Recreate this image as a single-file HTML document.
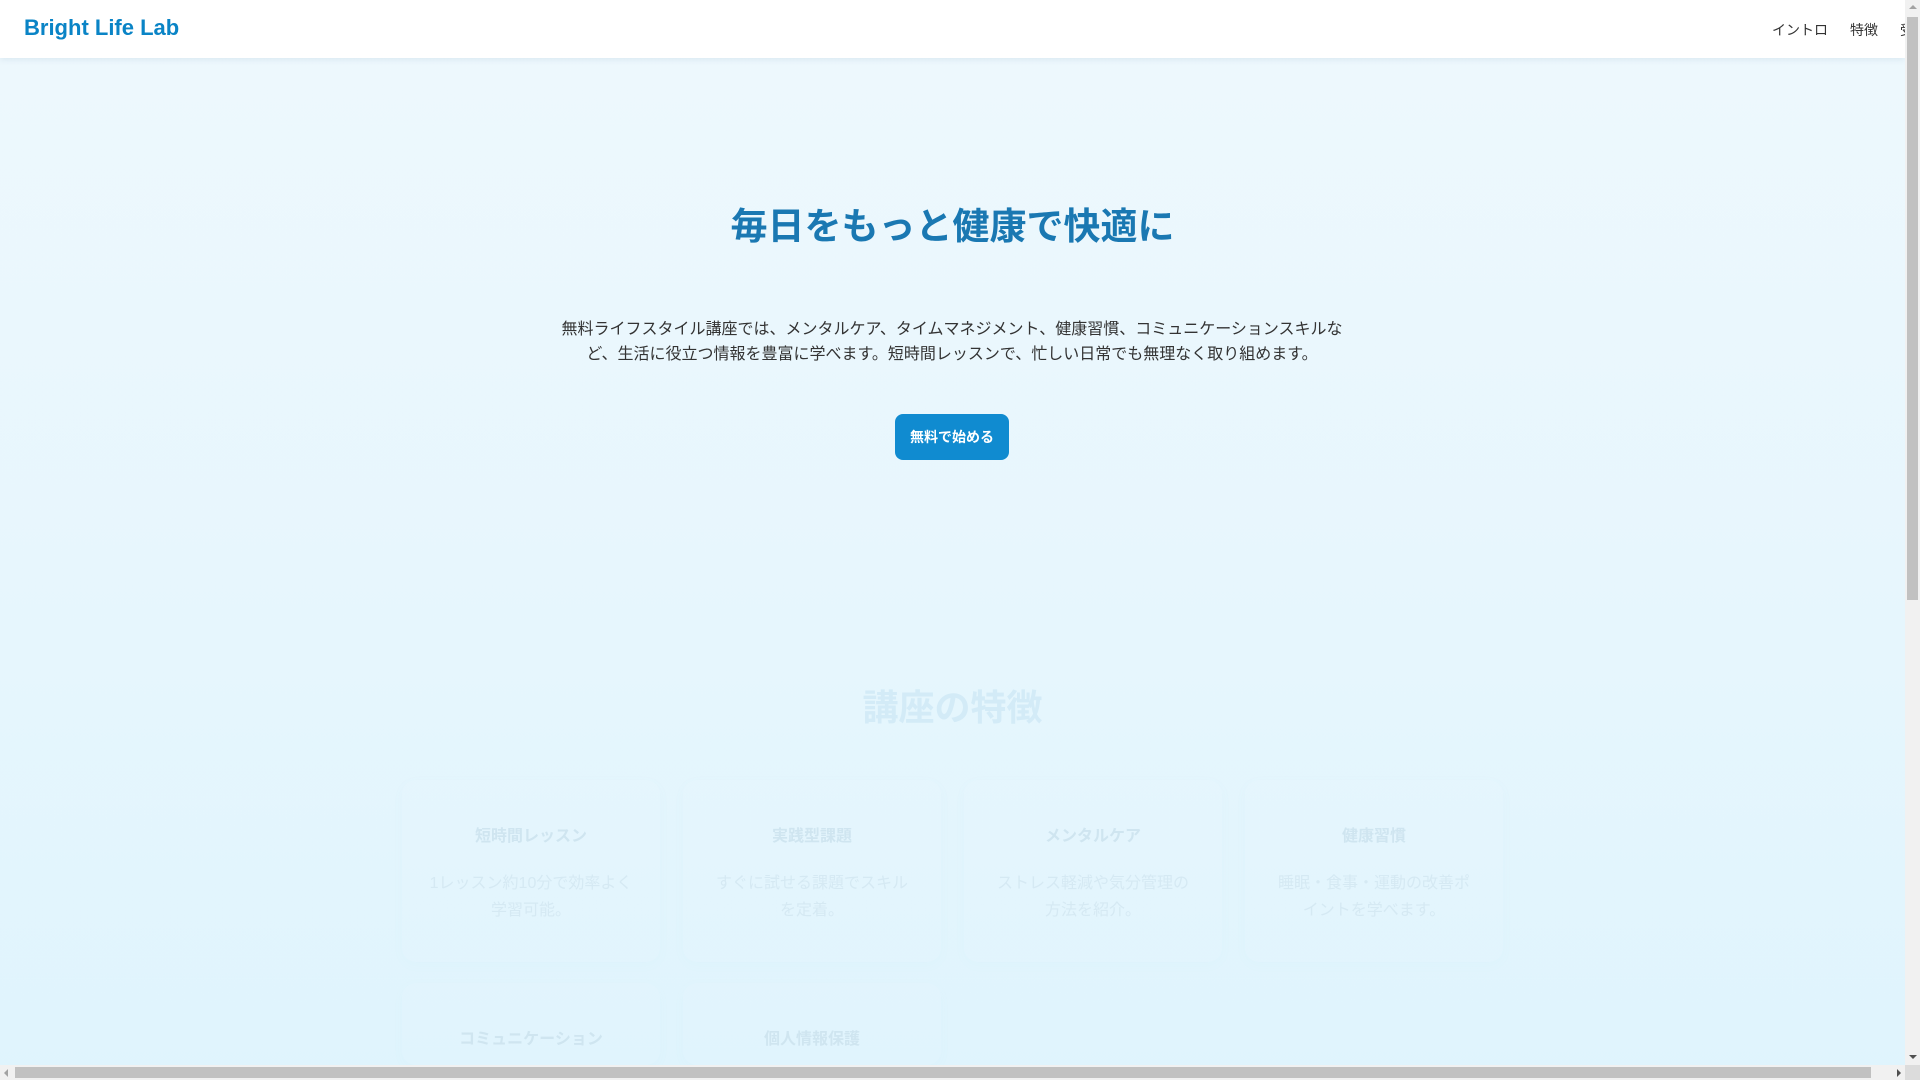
<!DOCTYPE html>
<html lang="ja"><head><meta charset="utf-8">
<style>
*{margin:0;padding:0;box-sizing:border-box}
html,body{width:1920px;height:1080px;overflow:hidden}
body{font-family:"Liberation Sans","Noto Sans CJK JP",sans-serif;background:linear-gradient(180deg,#eef8fd 0%,#e6f6fd 60%,#dff4fd 100%);position:relative}
header{position:absolute;left:0;top:0;width:1905px;height:58px;background:#fff;box-shadow:0 2px 6px rgba(0,60,110,.08);z-index:2}
.logo{position:absolute;left:24px;top:15px;font-size:22px;font-weight:bold;color:#0a84c6}
nav{position:absolute;left:1772px;top:20px;font-size:14px;color:#333;white-space:nowrap}
nav span{margin-right:22px}
h1{position:absolute;left:0;width:1905px;top:203px;text-align:center;font-size:37px;color:#1a78b2;font-weight:bold;line-height:48px}
p.lead{position:absolute;left:552px;width:800px;top:317px;text-align:center;font-size:16px;line-height:25px;color:#333}
.btn{position:absolute;left:895px;top:414px;width:114px;height:46px;background:#108bd0;border-radius:8px;color:#fff;font-size:14px;font-weight:bold;text-align:center;line-height:46px}
h2{position:absolute;left:0;width:1905px;top:684px;text-align:center;font-size:36px;color:#d3ebf7;line-height:48px}
.card{position:absolute;width:258px;height:182px;border-radius:14px;background:rgba(255,255,255,.06);box-shadow:0 3px 12px rgba(120,180,210,.03);text-align:center;overflow:hidden}
.card h3{margin-top:46px;font-size:16px;color:#cfe5f0;line-height:22px}
.card p{margin:22px 27px 0;font-size:16px;line-height:27px;color:#d5e9f3}
.vs{position:absolute;left:1905px;top:0;width:15px;height:1080px;background:#f1f1f1;z-index:5}
.vs .t{position:absolute;left:2px;top:17px;width:11px;height:583px;background:#c1c1c1}
.hs{position:absolute;left:0;top:1065px;width:1905px;height:15px;background:#f1f1f1;z-index:5}
.hs .t{position:absolute;left:15px;top:2px;width:1856px;height:11px;background:#c1c1c1}
.corner{position:absolute;left:1905px;top:1065px;width:15px;height:15px;background:#dcdcdc;z-index:6}
.ar{position:absolute;width:0;height:0;border:4px solid transparent}
</style></head><body>
<header><div class="logo">Bright Life Lab</div><nav><span>イントロ</span><span>特徴</span><span>受講</span></nav></header>
<h1>毎日をもっと健康で快適に</h1>
<p class="lead">無料ライフスタイル講座では、メンタルケア、タイムマネジメント、健康習慣、コミュニケーションスキルなど、生活に役立つ情報を豊富に学べます。短時間レッスンで、忙しい日常でも無理なく取り組めます。</p>
<div class="btn">無料で始める</div>
<h2>講座の特徴</h2>
<div class="card" style="left:402px;top:780px"><h3>短時間レッスン</h3><p>1レッスン約10分で効率よく学習可能。</p></div>
<div class="card" style="left:683px;top:780px"><h3>実践型課題</h3><p>すぐに試せる課題でスキルを定着。</p></div>
<div class="card" style="left:964px;top:780px"><h3>メンタルケア</h3><p>ストレス軽減や気分管理の方法を紹介。</p></div>
<div class="card" style="left:1245px;top:780px"><h3>健康習慣</h3><p>睡眠・食事・運動の改善ポイントを学べます。</p></div>
<div class="card" style="left:402px;top:983px;height:82px"><h3>コミュニケーション</h3></div>
<div class="card" style="left:683px;top:983px;height:82px"><h3>個人情報保護</h3></div>
<div class="vs"><div class="t"></div>
<div class="ar" style="left:3.5px;top:1px;border-bottom-color:#a3a3a3"></div>
<div class="ar" style="left:3.5px;top:1055px;border-top-color:#505050"></div></div>
<div class="hs"><div class="t"></div>
<div class="ar" style="left:0;top:3.5px;border-right-color:#a3a3a3"></div>
<div class="ar" style="left:1897px;top:3.5px;border-left-color:#505050"></div></div>
<div class="corner"></div>
</body></html>
